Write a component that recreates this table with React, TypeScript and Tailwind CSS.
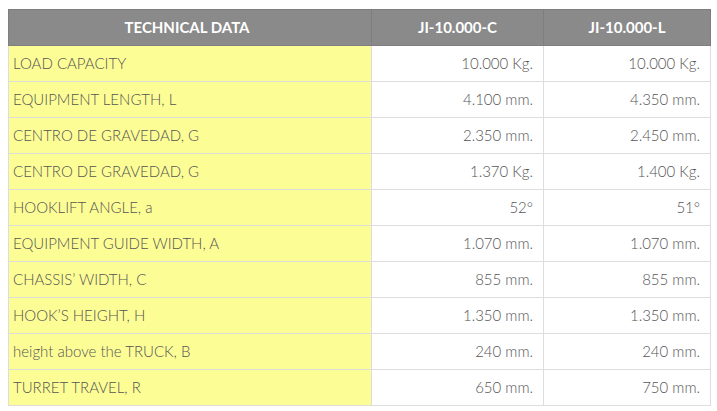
import React from "react";

const rows: [string, string, string][] = [
  ["LOAD CAPACITY", "10.000 Kg.", "10.000 Kg."],
  ["EQUIPMENT LENGTH, L", "4.100 mm.", "4.350 mm."],
  ["CENTRO DE GRAVEDAD, G", "2.350 mm.", "2.450 mm."],
  ["CENTRO DE GRAVEDAD, G", "1.370 Kg.", "1.400 Kg."],
  ["HOOKLIFT ANGLE, a", "52°", "51°"],
  ["EQUIPMENT GUIDE WIDTH, A", "1.070 mm.", "1.070 mm."],
  ["CHASSIS\u2019 WIDTH, C", "855 mm.", "855 mm."],
  ["HOOK\u2019S HEIGHT, H", "1.350 mm.", "1.350 mm."],
  ["height above the TRUCK, B", "240 mm.", "240 mm."],
  ["TURRET TRAVEL, R", "650 mm.", "750 mm."],
];

export default function App() {
  return (
    <div className="bg-white w-[717px] h-[411px] pt-[9px] pl-[8px]" style={{ fontFamily: "Lato, 'Open Sans', sans-serif" }}>
      <table className="border-collapse table-fixed w-[702px] text-[15px]">
        <colgroup>
          <col className="w-[363px]" />
          <col className="w-[172px]" />
          <col className="w-[167px]" />
        </colgroup>
        <thead>
          <tr className="h-[36px] bg-[#8a8a8a] text-white font-bold">
            <th className="border border-[#7e7e7e] text-center pr-[6px]">TECHNICAL DATA</th>
            <th className="border border-[#7e7e7e] text-center">JI-10.000-C</th>
            <th className="border border-[#7e7e7e] text-center">JI-10.000-L</th>
          </tr>
        </thead>
        <tbody className="text-[#555] font-light">
          {rows.map((r, i) => (
            <tr key={i} className="h-[36px]">
              <td className="border border-[#dddddd] bg-[#fdfd96] pl-[4px] text-left">{r[0]}</td>
              <td className="border border-[#dddddd] pr-[10px] text-right">{r[1]}</td>
              <td className="border border-[#dddddd] pr-[10px] text-right">{r[2]}</td>
            </tr>
          ))}
        </tbody>
      </table>
    </div>
  );
}
